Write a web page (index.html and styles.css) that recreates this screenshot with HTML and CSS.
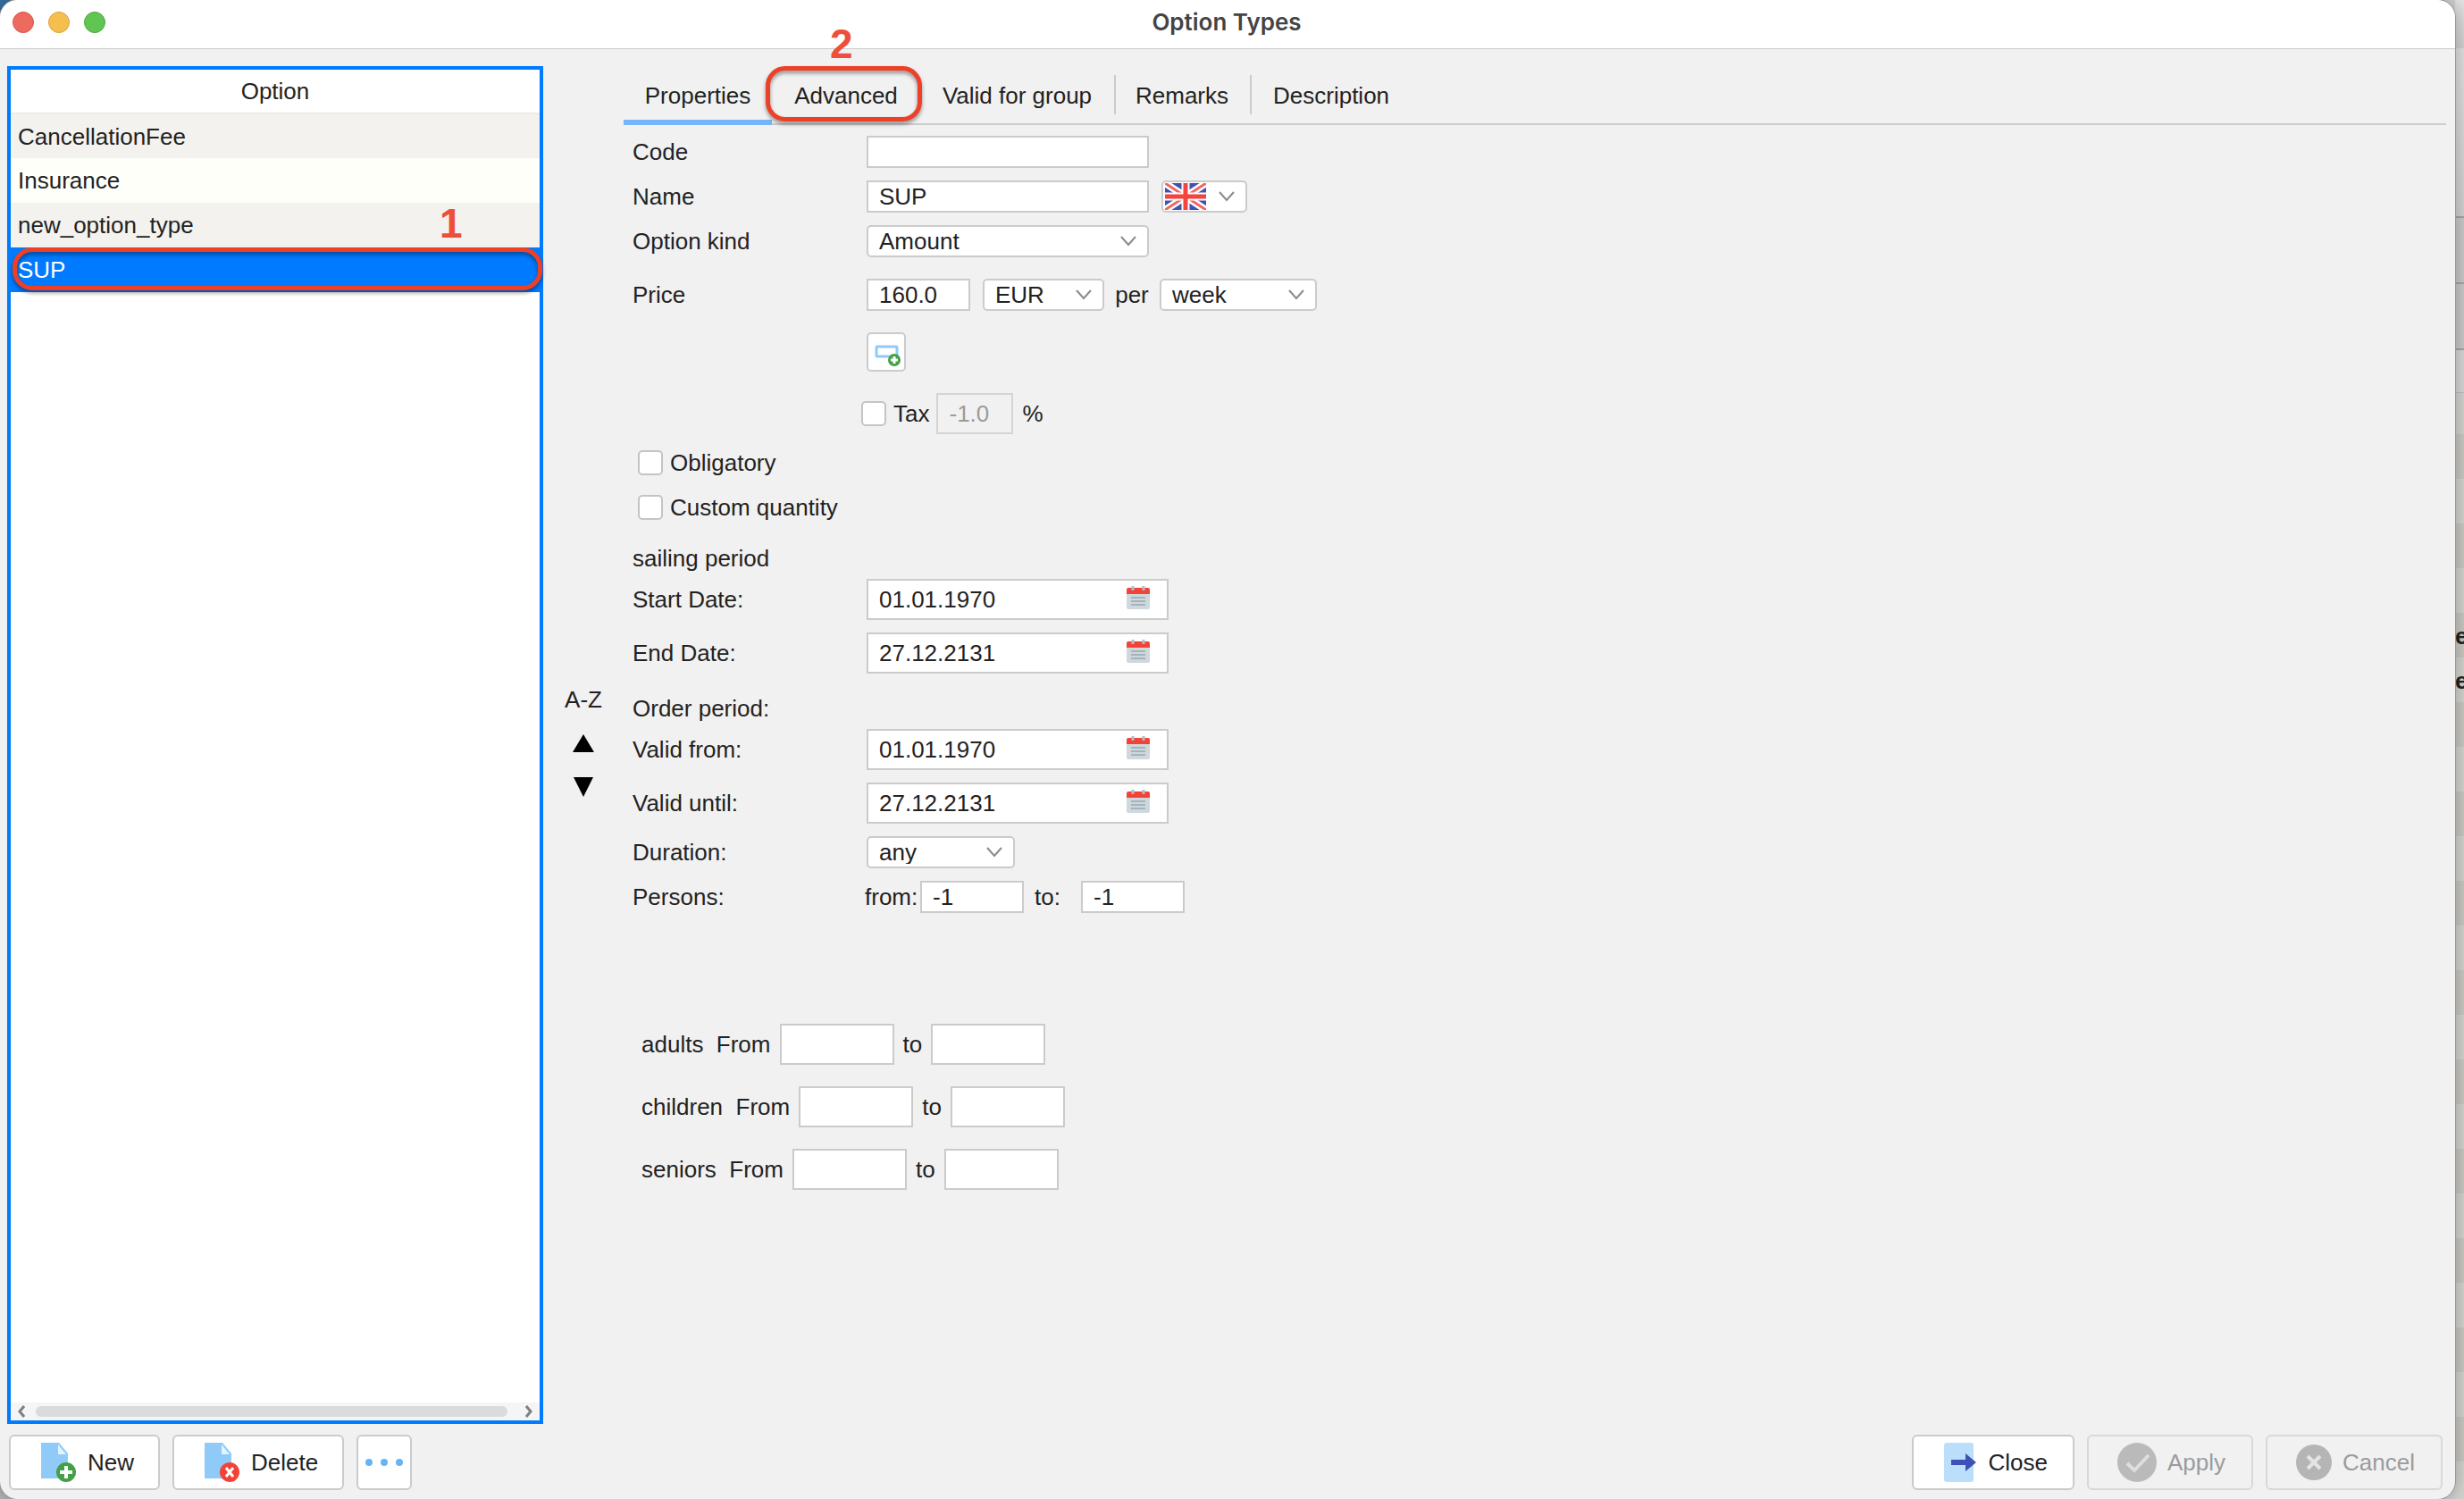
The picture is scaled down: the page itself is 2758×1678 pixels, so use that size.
FILE: index.html
```html
<!DOCTYPE html>
<html lang="en">
<head>
    <meta charset="utf-8">
    <title>Option Types</title>
    <link rel="stylesheet" href="styles.css">
</head>
<body>
    <div class="window">
        <header class="titlebar">
            <div class="lights">
                <button class="light red" aria-label="Close window"></button>
                <button class="light yellow" aria-label="Minimize"></button>
                <button class="light green" aria-label="Zoom"></button>
            </div>
            <h1>Option Types</h1>
        </header>

        <main class="main">
            <section class="list">
                <table>
                    <thead><tr><th>Option</th></tr></thead>
                    <tbody>
                        <tr><td>CancellationFee</td></tr>
                        <tr><td>Insurance</td></tr>
                        <tr><td>new_option_type<span class="step step-one">1</span></td></tr>
                        <tr class="selected"><td>SUP<span class="ring ring-row"></span></td></tr>
                    </tbody>
                </table>
                <div class="scrollbar">
                    <svg width="8" height="14" viewBox="0 0 8 14"><path d="M7 1L2 7l5 6"/></svg>
                    <div class="thumb"></div>
                    <svg width="8" height="14" viewBox="0 0 8 14"><path d="M1 1l5 6-5 6"/></svg>
                </div>
            </section>

            <div class="sorter">
                <button>A-Z</button>
                <button aria-label="Move up"><svg width="24" height="20" viewBox="0 0 24 20"><path d="M12 0l12 20H0z"/></svg></button>
                <button aria-label="Move down"><svg width="24" height="22" viewBox="0 0 24 22"><path d="M1 0h22L12 22z"/></svg></button>
            </div>

            <section class="details">
                <nav class="tabs">
                    <button class="tab active">Properties</button>
                    <button class="tab">Advanced<span class="ring ring-tab"></span><span class="step step-two">2</span></button>
                    <button class="tab long">Valid for group</button>
                    <button class="tab short divided">Remarks</button>
                    <button class="tab long divided last">Description</button>
                </nav>

                <form class="form">
                    <div class="group">
                        <div class="row">
                            <label class="caption" for="code">Code</label>
                            <input class="field wide" type="text" id="code">
                        </div>
                        <div class="row">
                            <label class="caption" for="name">Name</label>
                            <input class="field wide" type="text" id="name" value="SUP">
                            <div class="select language">
                                <svg class="flag" width="46" height="30" viewBox="0 0 46 30">
                                    <path fill="#3f51b5" d="M0 0h46v30H0z"/>
                                    <path stroke="#fff" stroke-width="8" d="M0 0l46 30M46 0L0 30"/>
                                    <path stroke="#f4655e" stroke-width="3" d="M0 0l46 30M46 0L0 30"/>
                                    <path stroke="#fff" stroke-width="9" d="M23 0v30M0 15h46"/>
                                    <path stroke="#f4443e" stroke-width="5" d="M23 0v30M0 15h46"/>
                                </svg>
                                <select aria-label="Language"><option value="en"></option></select>
                                <svg class="chevron" width="20" height="12" viewBox="0 0 20 12"><path d="M2 1l8 9 8-9"/></svg>
                            </div>
                        </div>
                        <div class="row">
                            <label class="caption" for="kind">Option kind</label>
                            <div class="select wide">
                                <select id="kind"><option>Amount</option></select>
                                <svg class="chevron" width="20" height="12" viewBox="0 0 20 12"><path d="M2 1l8 9 8-9"/></svg>
                            </div>
                        </div>
                    </div>

                    <div class="group price">
                        <div class="row">
                            <label class="caption" for="price">Price</label>
                            <input class="field number" type="text" id="price" value="160.0">
                            <div class="select currency">
                                <select aria-label="Currency"><option>EUR</option></select>
                                <svg class="chevron" width="20" height="12" viewBox="0 0 20 12"><path d="M2 1l8 9 8-9"/></svg>
                            </div>
                            <label class="per" for="unit">per</label>
                            <div class="select unit">
                                <select id="unit"><option>week</option></select>
                                <svg class="chevron" width="20" height="12" viewBox="0 0 20 12"><path d="M2 1l8 9 8-9"/></svg>
                            </div>
                        </div>
                        <div class="row">
                            <span class="caption"></span>
                            <button type="button" class="add" aria-label="Add price">
                                <svg width="32" height="28" viewBox="0 0 32 28">
                                    <rect x="5" y="5" width="23" height="11" rx="1" fill="#fff" stroke="#90caf9" stroke-width="3"/>
                                    <circle cx="25" cy="20" r="7" fill="#43a047"/>
                                    <path stroke="#fff" stroke-width="3" d="M25 16v8M21 20h8"/>
                                </svg>
                            </button>
                        </div>
                        <div class="row tax">
                            <span class="caption"></span>
                            <input type="checkbox" class="check" id="tax">
                            <label for="tax">Tax</label>
                            <input class="field tall rate" type="text" aria-label="Tax rate" value="-1.0" disabled>
                            <span>%</span>
                        </div>
                    </div>

                    <div class="group flags">
                        <label class="row"><input type="checkbox" class="check">Obligatory</label>
                        <label class="row"><input type="checkbox" class="check">Custom quantity</label>
                    </div>

                    <div class="group period">
                        <h2>sailing period</h2>
                        <div class="row">
                            <label class="caption" for="start">Start Date:</label>
                            <div class="date">
                                <input type="text" id="start" value="01.01.1970">
                                <button type="button" aria-label="Pick start date"><svg width="26" height="28"><use href="#calendar"/></svg></button>
                            </div>
                        </div>
                        <div class="row">
                            <label class="caption" for="end">End Date:</label>
                            <div class="date">
                                <input type="text" id="end" value="27.12.2131">
                                <button type="button" aria-label="Pick end date"><svg width="26" height="28"><use href="#calendar"/></svg></button>
                            </div>
                        </div>
                    </div>

                    <div class="group period order">
                        <h2>Order period:</h2>
                        <div class="row">
                            <label class="caption" for="from">Valid from:</label>
                            <div class="date">
                                <input type="text" id="from" value="01.01.1970">
                                <button type="button" aria-label="Pick valid from"><svg width="26" height="28"><use href="#calendar"/></svg></button>
                            </div>
                        </div>
                        <div class="row">
                            <label class="caption" for="until">Valid until:</label>
                            <div class="date">
                                <input type="text" id="until" value="27.12.2131">
                                <button type="button" aria-label="Pick valid until"><svg width="26" height="28"><use href="#calendar"/></svg></button>
                            </div>
                        </div>
                        <div class="row">
                            <label class="caption" for="duration">Duration:</label>
                            <div class="select duration">
                                <select id="duration"><option>any</option></select>
                                <svg class="chevron" width="20" height="12" viewBox="0 0 20 12"><path d="M2 1l8 9 8-9"/></svg>
                            </div>
                        </div>
                        <div class="row persons">
                            <span class="caption">Persons:</span>
                            <label class="from" for="pfrom">from:</label>
                            <input class="field number" type="text" id="pfrom" value="-1">
                            <label class="to" for="pto">to:</label>
                            <input class="field number" type="text" id="pto" value="-1">
                        </div>
                    </div>

                    <div class="group guests">
                        <div class="row">
                            <label for="adults">adults&nbsp; From</label>
                            <input class="field tall" type="text" id="adults">
                            <label for="adultsTo">to</label>
                            <input class="field tall" type="text" id="adultsTo">
                        </div>
                        <div class="row">
                            <label for="children">children&nbsp; From</label>
                            <input class="field tall" type="text" id="children">
                            <label for="childrenTo">to</label>
                            <input class="field tall" type="text" id="childrenTo">
                        </div>
                        <div class="row">
                            <label for="seniors">seniors&nbsp; From</label>
                            <input class="field tall" type="text" id="seniors">
                            <label for="seniorsTo">to</label>
                            <input class="field tall" type="text" id="seniorsTo">
                        </div>
                    </div>
                </form>
            </section>
        </main>

        <footer class="footer">
            <button class="btn new">
                <svg width="40" height="46" viewBox="0 0 40 46">
                    <path fill="#90caf9" d="M0 1h20l10 12v28H0z"/>
                    <path fill="#e1f5fe" d="M19 3l9 11h-9z"/>
                    <circle cx="28" cy="34" r="11" fill="#43a047"/>
                    <path stroke="#fff" stroke-width="4" d="M28 27v14M21 34h14"/>
                </svg>
                New
            </button>
            <button class="btn delete">
                <svg width="40" height="46" viewBox="0 0 40 46">
                    <path fill="#90caf9" d="M0 1h20l10 12v28H0z"/>
                    <path fill="#e1f5fe" d="M19 3l9 11h-9z"/>
                    <circle cx="28" cy="34" r="11" fill="#f44336"/>
                    <path stroke="#fff" stroke-width="3" d="M24 29l8 10M32 29l-8 10"/>
                </svg>
                Delete
            </button>
            <button class="btn more" aria-label="More">
                <svg width="44" height="10" viewBox="0 0 44 10" fill="#64b5f6"><circle cx="5" cy="5" r="4"/><circle cx="22" cy="5" r="4"/><circle cx="39" cy="5" r="4"/></svg>
            </button>
            <span class="spacer"></span>
            <button class="btn close">
                <svg width="38" height="46" viewBox="0 0 38 46">
                    <rect x="0" y="1" width="33" height="44" rx="3" fill="#bbdefb"/>
                    <path fill="#3f51b5" d="M8 20h16v-7l12 10-12 10v-7H8z"/>
                </svg>
                Close
            </button>
            <button class="btn apply" disabled>
                <svg width="44" height="46" viewBox="0 0 44 46">
                    <circle cx="22" cy="23" r="22" fill="#bababa"/>
                    <path fill="none" stroke="#dedede" stroke-width="4" d="M11 24l8 8 16-17"/>
                </svg>
                Apply
            </button>
            <button class="btn cancel" disabled>
                <svg width="40" height="46" viewBox="0 0 40 46">
                    <circle cx="20" cy="23" r="20" fill="#b5b5b5"/>
                    <path stroke="#e4e4e4" stroke-width="4" d="M13 16l14 14M27 16L13 30"/>
                </svg>
                Cancel
            </button>
        </footer>
    </div>

    <!-- strip of the parent window behind the dialog -->
    <aside class="behind">
        <div class="band bar"></div>
        <div class="band tools"></div>
        <div class="band box"></div>
        <div class="band box"></div>
        <div class="band head"></div>
        <div class="rows">
            <div></div><div></div><div></div><div></div><div></div>
            <div>e</div><div>e</div>
        </div>
    </aside>

    <svg width="0" height="0" class="defs">
        <symbol id="calendar" viewBox="0 0 26 28">
            <path fill="#cfd8dc" d="M0 9h26v16q0 2-2 2H2q-2 0-2-2z"/>
            <path fill="#f44336" d="M0 10V5q0-2 2-2h22q2 0 2 2v5z"/>
            <path stroke="#b0bec5" stroke-width="3" d="M7 1v5M19 1v5"/>
            <path stroke="#a4b4bc" stroke-width="2" d="M5 14h16M5 18h16M5 22h16"/>
        </symbol>
    </svg>
</body>
</html>
```
FILE: styles.css
```css
* {
    box-sizing: border-box;
}
body {
    margin: 0;
    min-height: 100vh;
    display: flex;
    overflow: hidden;
    background: linear-gradient(to right, transparent 50%, #d0d0d0 50%), linear-gradient(#3a6ea5 50%, #b4b4b4 50%);
    color: #222;
    font-family: "Liberation Sans", Arial, sans-serif;
    font-size: 26px;
    line-height: 26px;
}
button, input, select {
    font: inherit;
    color: inherit;
    margin: 0;
}
button {
    padding: 0;
    border: none;
    background: none;
}
h1, h2 {
    margin: 0;
    font-size: 26px;
}
.window {
    flex: 1;
    display: flex;
    flex-direction: column;
    background: #f1f1f1;
    border-radius: 20px;
    overflow: hidden;
    box-shadow: 0 0 0 1px #999, 0 0 20px rgba(0, 0, 0, 0.3);
    z-index: 1;
}

/* title bar */
.titlebar {
    display: grid;
    grid-template-columns: 1fr auto 1fr;
    align-items: center;
    height: 54px;
    padding: 0 16px 4px 14px;
    background: #fff;
    box-shadow: 0 1px 0 #cbcbcb;
}
.titlebar h1 {
    font-family: Inter, sans-serif;
    font-weight: 600;
    color: #444;
}
.lights {
    display: flex;
    gap: 16px;
}
.light {
    width: 24px;
    height: 24px;
    border-radius: 50%;
}
.red { background: #ed6a5e; border: 1px solid #d9534a; }
.yellow { background: #f5bf4f; border: 1px solid #d9a13a; }
.green { background: #61c554; border: 1px solid #4ba83d; }

.main {
    flex: 1;
    display: flex;
    padding: 20px 10px 12px 8px;
}

/* option list */
.list {
    width: 600px;
    display: flex;
    flex-direction: column;
    justify-content: space-between;
    border: 4px solid #007aff;
    background: #fff;
}
.list table {
    width: 100%;
    border-collapse: collapse;
}
.list th, .list td {
    height: 50px;
    padding: 0 8px;
    font-weight: normal;
}
.list th {
    height: 49px;
    border-bottom: 2px solid #ebebeb;
}
.list td {
    position: relative;
}
.list tbody tr:nth-child(odd) { background: #f3f2ee; }
.list tbody tr:nth-child(even) { background: #fffffa; }
.list tbody tr.selected {
    background: #007aff;
    color: #fff;
}
.scrollbar {
    display: flex;
    align-items: center;
    justify-content: space-between;
    height: 20px;
    padding: 0 8px;
    background: #f5f5f5;
}
.scrollbar svg {
    fill: none;
    stroke: #808080;
    stroke-width: 3;
}
.thumb {
    flex: 1;
    height: 12px;
    margin: 0 20px 0 12px;
    border-radius: 6px;
    background: #dbdbdb;
}

/* red marks over the page */
.ring {
    position: absolute;
    border: 5px solid #ed4027;
    border-radius: 22px;
    filter: drop-shadow(0 3px 2px rgba(0, 0, 0, 0.4));
}
.ring-row {
    inset: 0 -3px 2px 2px;
    z-index: 1;
}
.ring-tab {
    inset: 0 -2px 4px -7px;
}
.step {
    position: absolute;
    font-size: 46px;
    line-height: 46px;
    font-weight: bold;
    color: #ee4f3b;
}
.step-one {
    left: 480px;
    top: 0;
}
.step-two {
    left: 65px;
    top: -48px;
}

.sorter {
    width: 90px;
    display: flex;
    flex-direction: column;
    align-items: center;
    justify-content: center;
    gap: 24px;
    padding-bottom: 2px;
}
.sorter button {
    height: 26px;
}

/* tabs */
.details {
    flex: 1;
}
.tabs {
    display: flex;
    height: 66px;
    border-bottom: 2px solid #cbcbcb;
}
.tab {
    position: relative;
    width: 166px;
    height: 66px;
}
.tab.long { width: 217px; }
.tab.short { width: 152px; }
.tab.last {
    width: auto;
    padding: 0 26px;
}
.tab.active {
    border-bottom: 6px solid #78b4f8;
    padding-top: 6px;
}
.tab.divided {
    background: linear-gradient(#cbcbcb, #cbcbcb) 0 10px / 2px 44px no-repeat;
}

/* form */
.form {
    padding: 12px 10px;
}
.group {
    display: flex;
    flex-direction: column;
    gap: 14px;
}
.row {
    display: flex;
    align-items: center;
}
.caption {
    width: 262px;
}
.field {
    height: 36px;
    padding: 0 12px;
    border: 2px solid #cbcbcb;
    background: #fff;
}
.field:disabled {
    background: #f1f1f1;
    color: #9b9b9b;
    border-color: #d4d4d4;
}
.field.tall {
    height: 46px;
}
.wide { width: 316px; }
.number { width: 116px; }
.select {
    position: relative;
    display: flex;
    align-items: center;
    height: 36px;
    border: 2px solid #cbcbcb;
    border-radius: 5px;
    background: #fff;
}
.select select {
    appearance: none;
    width: 100%;
    height: 32px;
    padding: 0 12px;
    border: none;
    background: none;
}
.chevron {
    position: absolute;
    right: 11px;
    fill: none;
    stroke: #8a8a8a;
    stroke-width: 2;
    pointer-events: none;
}
.language {
    width: 96px;
    margin-left: 14px;
}
.flag {
    flex: none;
    margin-left: 2px;
}
.language select {
    padding: 0;
}
.currency {
    width: 136px;
    margin-left: 14px;
}
.unit { width: 176px; }
.duration { width: 166px; }
.per {
    width: 62px;
    text-align: center;
}
.price {
    margin-top: 24px;
    gap: 24px;
}
.add {
    display: flex;
    align-items: center;
    justify-content: center;
    width: 44px;
    height: 44px;
    padding-top: 6px;
    border: 2px solid #cbcbcb;
    border-radius: 5px;
    background: #fff;
}
.check {
    appearance: none;
    width: 28px;
    height: 28px;
    border: 2px solid #c4c4c4;
    border-radius: 5px;
    background: #fff;
}
.tax .caption { width: 256px; }
.tax label { margin: 0 8px; }
.rate {
    width: 86px;
    margin-right: 10px;
}
.flags {
    margin-top: 18px;
    gap: 22px;
    padding-left: 6px;
    align-items: flex-start;
}
.flags .row { gap: 8px; }
.period { margin-top: 30px; }
.order { margin-top: 26px; }
.period h2 {
    font-weight: normal;
    margin-bottom: -4px;
}
.date {
    display: flex;
    align-items: center;
    width: 338px;
    height: 46px;
    border: 2px solid #cbcbcb;
    background: #fff;
}
.date input {
    flex: 1;
    min-width: 0;
    padding: 0 12px;
    border: none;
    background: none;
}
.date button {
    display: flex;
    margin-right: 19px;
    padding-bottom: 4px;
}
.persons .caption { width: 260px; }
.from { width: 62px; }
.to {
    width: 64px;
    padding-left: 12px;
}
.guests {
    margin-top: 124px;
    padding-left: 10px;
    gap: 24px;
}
.guests .row { gap: 10px; }
.guests .field { width: 128px; }

/* bottom buttons */
.footer {
    display: flex;
    padding: 0 14px 10px 10px;
    gap: 14px;
}
.btn {
    display: flex;
    align-items: center;
    height: 62px;
    padding: 0 27px 0 34px;
    gap: 12px;
    border: 2px solid #cbcbcb;
    border-radius: 6px;
    background: #fff;
}
.btn:disabled {
    background: #f1f1f1;
    border-color: #d8d8d8;
    color: #9b9b9b;
}
.more { padding: 0 7px; }
.close {
    padding-right: 28px;
}
.apply, .cancel {
    padding: 0 29px 0 32px;
}
.spacer { flex: 1; }

.behind {
    width: 10px;
    height: 100vh;
    overflow: hidden;
    display: flex;
    flex-direction: column;
    background: #d6d6d2;
}
.bar {
    height: 54px;
    background: linear-gradient(#e2e2e2, #cfcfcf);
}
.tools {
    height: 188px;
    background: linear-gradient(#e0e0e0, #d0d0d0);
}
.box {
    height: 74px;
    background: #c8c8c8;
    border-top: 2px solid #a4a4a4;
}
.head {
    height: 50px;
    background: #d6d6d6;
    border-top: 2px solid #a4a4a4;
    border-bottom: 1px solid #bcbcbc;
}
.rows {
    flex: 1;
    font-weight: bold;
    background: repeating-linear-gradient(#d3d3ce 0 46px, #c8c7c2 46px 96px, #d3d3ce 96px 100px);
}
.rows div {
    height: 50px;
    line-height: 44px;
}
.defs { position: absolute; }
```
